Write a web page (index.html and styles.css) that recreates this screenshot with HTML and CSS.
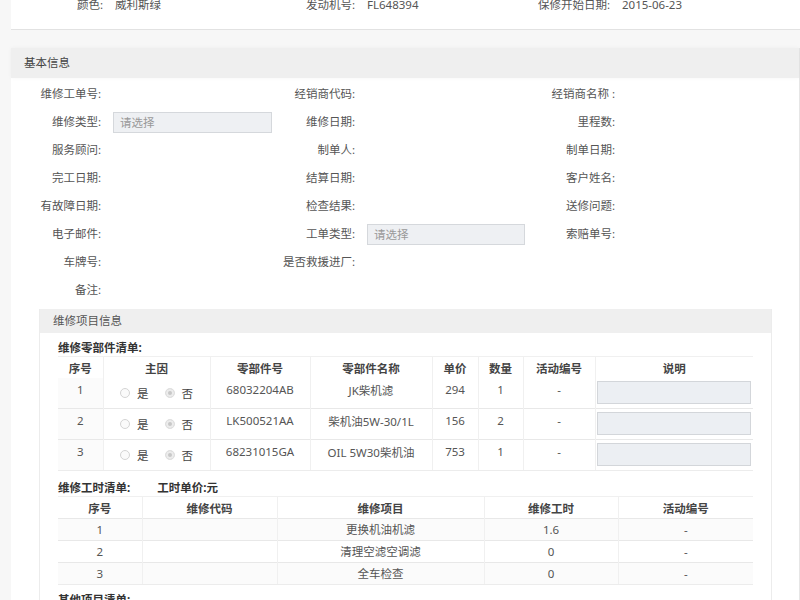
FILE: index.html
```html
<!DOCTYPE html>
<html lang="zh-CN">
<head>
<meta charset="utf-8">
<title>维修工单</title>
<link rel="stylesheet" href="styles.css">
</head>
<body>
<div class="page">
  <section class="vehicle-card">
    <div class="vehicle-row">
      <span class="v-label">颜色:</span><span class="v-value">威利斯绿</span>
      <span class="v-label">发动机号:</span><span class="v-value">FL648394</span>
      <span class="v-label">保修开始日期:</span><span class="v-value">2015-06-23</span>
    </div>
  </section>

  <section class="panel">
    <div class="panel-head">基本信息</div>
    <div class="form-grid">
      <span class="f-label">维修工单号:</span><span class="f-field"></span>
      <span class="f-label">经销商代码:</span><span class="f-field"></span>
      <span class="f-label">经销商名称 :</span><span class="f-field"></span>

      <span class="f-label">维修类型:</span><span class="f-field"><span class="select">请选择</span></span>
      <span class="f-label">维修日期:</span><span class="f-field"></span>
      <span class="f-label">里程数:</span><span class="f-field"></span>

      <span class="f-label">服务顾问:</span><span class="f-field"></span>
      <span class="f-label">制单人:</span><span class="f-field"></span>
      <span class="f-label">制单日期:</span><span class="f-field"></span>

      <span class="f-label">完工日期:</span><span class="f-field"></span>
      <span class="f-label">结算日期:</span><span class="f-field"></span>
      <span class="f-label">客户姓名:</span><span class="f-field"></span>

      <span class="f-label">有故障日期:</span><span class="f-field"></span>
      <span class="f-label">检查结果:</span><span class="f-field"></span>
      <span class="f-label">送修问题:</span><span class="f-field"></span>

      <span class="f-label">电子邮件:</span><span class="f-field"></span>
      <span class="f-label">工单类型:</span><span class="f-field"><span class="select select-b">请选择</span></span>
      <span class="f-label">索赔单号:</span><span class="f-field"></span>

      <span class="f-label">车牌号:</span><span class="f-field"></span>
      <span class="f-label">是否救援进厂:</span><span class="f-field"></span>
      <span class="f-label"></span><span class="f-field"></span>

      <span class="f-label">备注:</span><span class="f-field"></span>
    </div>

    <section class="sub-panel">
      <div class="sub-head">维修项目信息</div>
      <div class="sub-body">
        <div class="list-title">维修零部件清单:</div>
        <table class="grid parts">
          <colgroup>
            <col style="width:45px"><col style="width:107px"><col style="width:100px"><col style="width:122px">
            <col style="width:46px"><col style="width:45px"><col style="width:72px"><col style="width:158px">
          </colgroup>
          <thead>
            <tr><th>序号</th><th>主因</th><th>零部件号</th><th>零部件名称</th><th>单价</th><th>数量</th><th>活动编号</th><th>说明</th></tr>
          </thead>
          <tbody>
            <tr>
              <td class="idx">1</td>
              <td><span class="radios"><span class="radio"></span>是<span class="radio on"></span>否</span></td>
              <td>68032204AB</td><td>JK柴机滤</td><td>294</td><td>1</td><td>-</td>
              <td class="note"><span class="note-box"></span></td>
            </tr>
            <tr>
              <td class="idx">2</td>
              <td><span class="radios"><span class="radio"></span>是<span class="radio on"></span>否</span></td>
              <td>LK500521AA</td><td>柴机油5W-30/1L</td><td>156</td><td>2</td><td>-</td>
              <td class="note"><span class="note-box"></span></td>
            </tr>
            <tr>
              <td class="idx">3</td>
              <td><span class="radios"><span class="radio"></span>是<span class="radio on"></span>否</span></td>
              <td>68231015GA</td><td>OIL 5W30柴机油</td><td>753</td><td>1</td><td>-</td>
              <td class="note"><span class="note-box"></span></td>
            </tr>
          </tbody>
        </table>

        <div class="list-title labor-title">维修工时清单:<span class="price">工时单价:元</span></div>
        <table class="grid labor">
          <colgroup>
            <col style="width:84px"><col style="width:135px"><col style="width:207px"><col style="width:134px"><col style="width:135px">
          </colgroup>
          <thead>
            <tr><th>序号</th><th>维修代码</th><th>维修项目</th><th>维修工时</th><th>活动编号</th></tr>
          </thead>
          <tbody>
            <tr><td>1</td><td></td><td>更换机油机滤</td><td>1.6</td><td>-</td></tr>
            <tr><td>2</td><td></td><td>清理空滤空调滤</td><td>0</td><td>-</td></tr>
            <tr><td>3</td><td></td><td>全车检查</td><td>0</td><td>-</td></tr>
          </tbody>
        </table>

        <div class="list-title other-title">其他项目清单:</div>
      </div>
    </section>
  </section>
</div>
</body>
</html>
```

FILE: styles.css
```css
html, body {
  margin: 0;
  padding: 0;
}

body {
  background: #f7f7f7;
  font-family: "Noto Sans", "Noto Sans CJK SC", sans-serif;
  font-size: 11.5px;
  color: #555;
  overflow: hidden;
}

.page {
  padding-left: 11px;
}

/* vehicle summary card, scrolled partly out of view */
.vehicle-card {
  background: #fff;
  border-bottom: 1px solid #e2e2e2;
  height: 29px;
  overflow: hidden;
}

.vehicle-row {
  display: grid;
  grid-template-columns: 92px 162px 90px 165px 90px 1fr;
  line-height: 18px;
  margin-top: -4px;
}

.v-label {
  text-align: right;
  color: #555;
}

.v-value {
  padding-left: 12px;
  color: #555;
}

/* main panel */
.panel {
  margin-top: 18px;
  background: #fff;
  border-right: 1px solid #e6e6e6;
  padding-bottom: 20px;
}

.panel-head {
  height: 30px;
  line-height: 30px;
  padding-left: 13px;
  background: #efefef;
  color: #444;
  box-shadow: 0 0 4px rgba(0, 0, 0, 0.04);
}

.form-grid {
  display: grid;
  grid-template-columns: 90px 174px 80px 172px 88px 1fr;
  grid-auto-rows: 28px;
  padding-top: 2px;
}

.f-label {
  text-align: right;
  line-height: 28px;
  color: #555;
  white-space: nowrap;
}

.f-field {
  padding-left: 12px;
  display: flex;
  align-items: center;
}

.select {
  box-sizing: border-box;
  width: 159px;
  height: 21px;
  line-height: 19px;
  padding-left: 6px;
  background: #eef0f3;
  border: 1px solid #d5d8dc;
  color: #999;
}

.select-b {
  width: 158px;
}

/* repair items sub panel */
.sub-panel {
  margin: 5px 27px 0 28px;
  border: 1px solid #ececec;
  border-top: none;
}

.sub-head {
  height: 24px;
  line-height: 24px;
  padding-left: 13px;
  background: #efefef;
  color: #555;
}

.sub-body {
  padding: 6px 18px 0 18px;
}

.list-title {
  font-weight: bold;
  color: #333;
  line-height: 17px;
  height: 17px;
}

.labor-title {
  margin-top: 8px;
}

.price {
  margin-left: 27px;
}

.other-title {
  margin-top: 6px;
}

table.grid {
  border-collapse: collapse;
  table-layout: fixed;
  width: 695px;
  color: #555;
}

table.grid th {
  font-weight: bold;
  color: #444;
  height: 21px;
  padding: 0;
  text-align: center;
  border-left: 1px solid #f0f0f0;
  border-top: 1px solid #f0f0f0;
}

table.grid th:first-child {
  border-left: none;
}

table.grid td {
  text-align: center;
  padding: 0;
  border-left: 1px solid #f0f0f0;
  border-top: 1px solid #e8e8e8;
}

table.grid td:first-child {
  border-left: none;
}

table.grid tbody tr:last-child td {
  border-bottom: 1px solid #ececec;
}

table.parts td {
  height: 26px;
  vertical-align: top;
  padding-top: 4px;
}

table.parts tbody tr:first-child td {
  border-top: none;
}

table.parts td.idx {
  background: #fbfbfb;
}

table.parts td.note {
  padding-top: 3px;
}

.radios {
  display: inline-flex;
  align-items: center;
  margin-top: 3px;
  color: #444;
}

.radio {
  box-sizing: border-box;
  width: 10px;
  height: 10px;
  border-radius: 50%;
  border: 1px solid #d4d4d4;
  background: #fafafa;
  margin-right: 7px;
}

.radio.on {
  margin-left: 16px;
  background: #c8c8c8;
  border-color: #e0e0e0;
  box-shadow: inset 0 0 0 2px #ececec;
}

.note-box {
  display: block;
  box-sizing: border-box;
  width: 154px;
  height: 23px;
  margin-left: 1px;
  background: #eceff3;
  border: 1px solid #d3d6da;
}

table.labor th {
  height: 21px;
}

table.labor td {
  height: 21px;
  line-height: 21px;
}

table.labor tbody tr:nth-child(odd) td {
  background: #fbfbfb;
}
```
